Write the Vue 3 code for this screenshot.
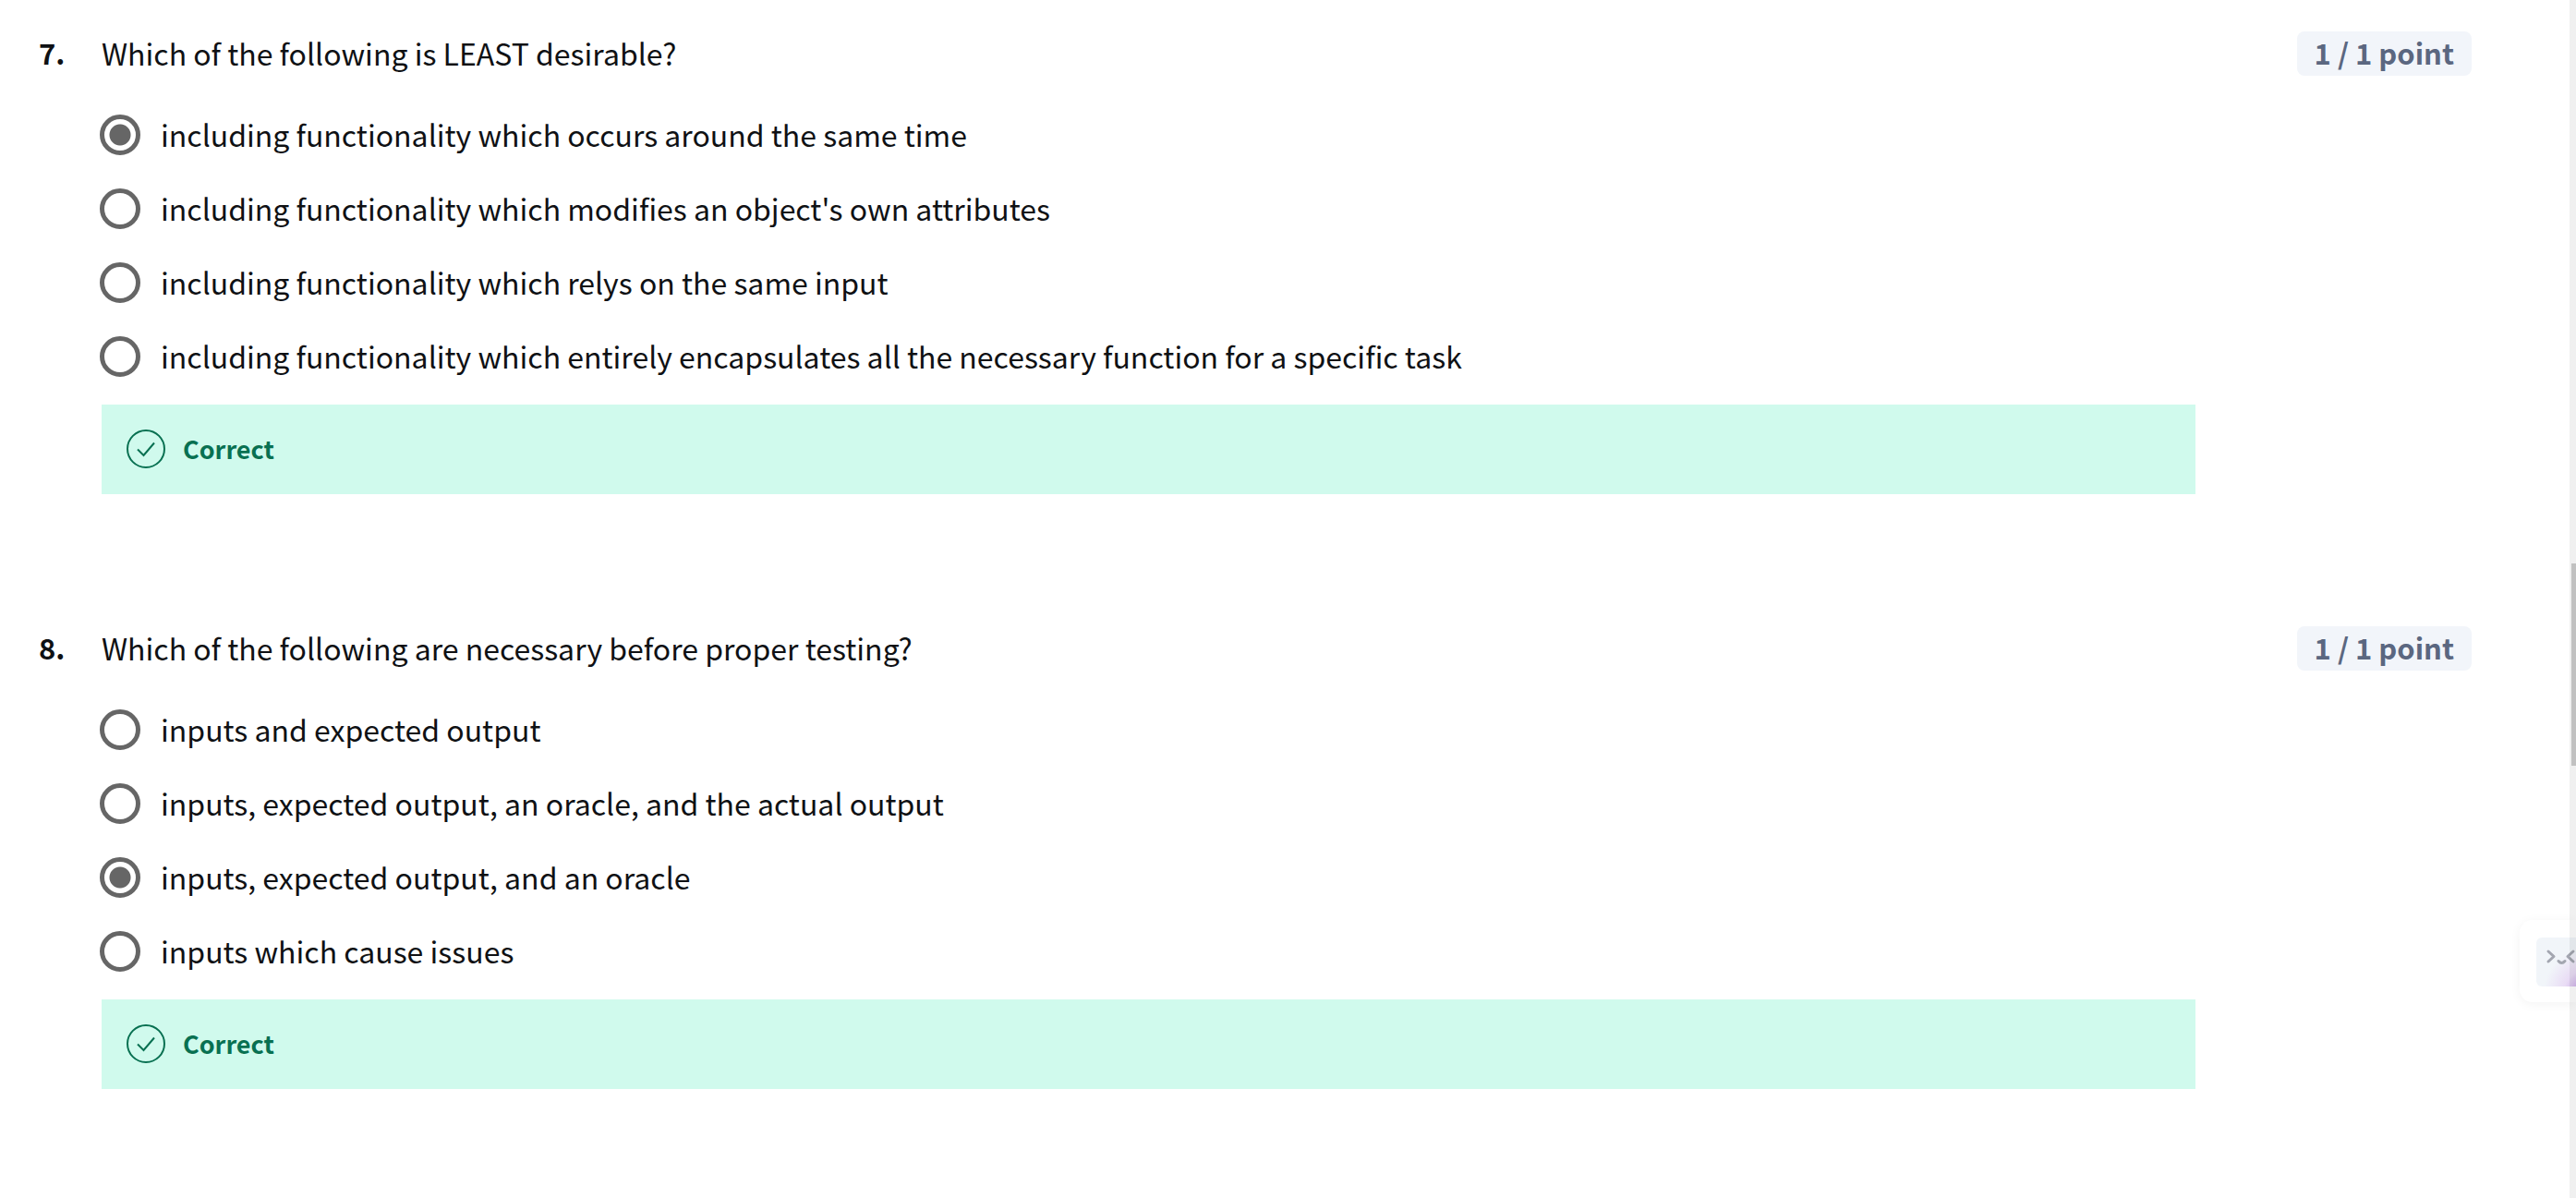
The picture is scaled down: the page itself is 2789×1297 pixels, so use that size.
<script setup>
import { reactive } from 'vue'

const questions = reactive([
  {
    number: 7,
    prompt: 'Which of the following is LEAST desirable?',
    options: [
      'including functionality which occurs around the same time',
      "including functionality which modifies an object's own attributes",
      'including functionality which relys on the same input',
      'including functionality which entirely encapsulates all the necessary function for a specific task',
    ],
    selected: 0,
    points: '1 / 1 point',
    feedback: 'Correct',
  },
  {
    number: 8,
    prompt: 'Which of the following are necessary before proper testing?',
    options: [
      'inputs and expected output',
      'inputs, expected output, an oracle, and the actual output',
      'inputs, expected output, and an oracle',
      'inputs which cause issues',
    ],
    selected: 2,
    points: '1 / 1 point',
    feedback: 'Correct',
  },
])
</script>

<template>
  <main class="quiz">
    <section v-for="q in questions" :key="q.number" class="question">
      <span class="number">{{ q.number }}.</span>
      <h2 :id="`prompt-${q.number}`" class="prompt">{{ q.prompt }}</h2>
      <span class="points">{{ q.points }}</span>
      <div class="answer">
        <div class="options" role="radiogroup" :aria-labelledby="`prompt-${q.number}`">
          <label v-for="(option, i) in q.options" :key="i" class="option">
            <input v-model="q.selected" class="radio" type="radio" :name="`question-${q.number}`" :value="i" />
            <span>{{ option }}</span>
          </label>
        </div>
        <div class="feedback">
          <svg class="check" viewBox="0 0 42 42" fill="none" stroke="currentColor" stroke-width="2" aria-hidden="true">
            <circle cx="21" cy="21" r="20" />
            <path d="M12 21.500 L18.500 28 L30 14.500" />
          </svg>
          <span>{{ q.feedback }}</span>
        </div>
      </div>
    </section>
  </main>

  <button class="helper" type="button" aria-label="Open assistant">
    <svg class="face" viewBox="0 0 60 53" fill="none" stroke="#a3a6b0" stroke-width="3" stroke-linecap="round" stroke-linejoin="round" aria-hidden="true">
      <path d="M13 15 L19 20.500 L13 26" />
      <path d="M24 25.500 Q27.500 29.500 31 25.500" />
      <path d="M40 15 L34 20.500 L40 26" />
    </svg>
  </button>

  <div class="scroll-track" aria-hidden="true"><div class="scroll-thumb"></div></div>
</template>

<style>
body {
  margin: 0;
  background: #fff;
  overflow: hidden;
}
</style>

<style scoped>
.quiz {
  display: flex;
  flex-direction: column;
  gap: 143px;
  padding: 34px 113px 0 42px;
  font-family: "Noto Sans CJK SC", "Noto Sans", sans-serif;
  font-size: 32px;
  line-height: 46px;
  color: #0f1114;
}

.question {
  display: grid;
  grid-template-columns: 68px 1fr 299px;
  row-gap: 42px;
}

.number {
  font-size: 31px;
  font-weight: 600;
}

.prompt {
  margin: 0;
  font-size: 32px;
  font-weight: 400;
}

.points {
  justify-self: end;
  padding: 0 19px 2px;
  border-radius: 8px;
  background: #f2f5fa;
  color: #5b6780;
  font-size: 31px;
  font-weight: 600;
}

.answer {
  grid-column: 2;
}

.options {
  display: flex;
  flex-direction: column;
  gap: 36px;
}

.option {
  display: flex;
  align-items: flex-start;
  gap: 22px;
  height: 44px;
  margin-left: -2px;
  line-height: 42px;
}

.radio {
  appearance: none;
  box-sizing: border-box;
  flex: none;
  width: 44px;
  height: 44px;
  margin: 0;
  border: 5px solid #666;
  border-radius: 50%;
  background: #fff;
}

.radio:checked {
  background: radial-gradient(circle, #666 0 11px, #fff 12px);
}

.feedback {
  display: flex;
  align-items: center;
  gap: 19px;
  margin-top: 30px;
  padding: 25px 27px 26px;
  background: #d0faed;
  color: #087051;
  font-size: 27px;
  font-weight: 700;
}

.check {
  flex: none;
  width: 42px;
  height: 42px;
}

.helper {
  position: fixed;
  top: 996px;
  right: 0;
  box-sizing: border-box;
  width: 61px;
  height: 89px;
  padding: 19px 0 17px 18px;
  overflow: visible;
  border: 0;
  border-radius: 14px 0 0 14px;
  background: #fff;
  box-shadow: 0 2px 12px rgba(0, 0, 0, 0.05);
}

.face {
  display: block;
  width: 60px;
  height: 53px;
  margin-right: -17px;
  border-radius: 6px;
  background: radial-gradient(circle at 56px 60px, #b78be0 0, #e9dcf5 26px, #f1f5f9 48px);
}

.scroll-track {
  position: fixed;
  top: 0;
  right: 0;
  bottom: 0;
  width: 7px;
  background: rgba(0, 0, 0, 0.06);
}

.scroll-thumb {
  height: 219px;
  margin: 610px 0 0 2px;
  background: #c1c1c1;
}
</style>
